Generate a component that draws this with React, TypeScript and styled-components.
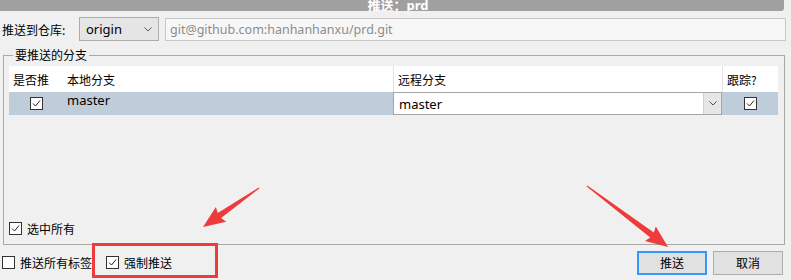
import React from 'react'
import styled, { createGlobalStyle } from 'styled-components'

const GlobalStyle = createGlobalStyle`
  html, body {
    margin: 0;
    padding: 0;
    background: #f0f0f0;
  }
  body {
    font-family: 'Noto Sans', 'Noto Sans CJK SC', sans-serif;
    font-size: 12px;
    color: #000;
  }
`

const Window = styled.div`
  position: relative;
  width: 791px;
  height: 280px;
  display: flex;
  flex-direction: column;
  overflow: hidden;
  background: #f0f0f0;
`

const TitleBar = styled.div`
  height: 11px;
  margin-right: 7px;
  background: #a0a0a0;
  border-bottom-right-radius: 3px;
  display: flex;
  justify-content: center;
  align-items: flex-end;
  overflow: hidden;
`

const TitleText = styled.span`
  color: #fff;
  font-weight: bold;
  font-size: 13px;
  line-height: 13px;
  margin-bottom: -1px;
  padding-left: 12px;
`

const RepoRow = styled.div`
  display: flex;
  align-items: center;
  height: 24px;
  margin-top: 6px;
  padding: 0 5px 0 2px;
`

const Label = styled.span`
  width: 77px;
  font-family: 'Noto Sans CJK SC', sans-serif;
`

const SelectBox = styled.div`
  box-sizing: border-box;
  width: 80px;
  height: 24px;
  background: #e5e5e5;
  border: 1px solid #adadad;
  display: flex;
  align-items: center;
  justify-content: space-between;
  padding: 0 6px 0 6px;
  font-size: 13px;
`

const UrlInput = styled.div`
  box-sizing: border-box;
  flex: 1;
  height: 23px;
  margin-left: 6px;
  background: #f7f7f7;
  border: 1px solid #c8c8c8;
  color: #8c8c8c;
  display: flex;
  align-items: center;
  padding-left: 4px;
  font-size: 12.5px;
`

const GroupBox = styled.fieldset`
  flex: 1;
  margin: 6px 6px 0 3px;
  padding: 0 6px 7px 5px;
  border: 1px solid #a8a8a8;
  min-width: 0;
  display: flex;
  flex-direction: column;
`

const Legend = styled.legend`
  margin-left: 4px;
  padding: 0 2px;
  font-family: 'Noto Sans CJK SC', sans-serif;
  line-height: 16px;
`

const Table = styled.div`
  display: grid;
  grid-template-columns: 54px 330px 329px 56px;
  margin-top: 3px;
`

const HeadCell = styled.div<{ $sep?: boolean }>`
  height: 26px;
  background: #fff;
  display: flex;
  align-items: center;
  padding-left: 4px;
  border-left: ${p => (p.$sep ? '1px solid #e3e3e3' : 'none')};
  font-family: 'Noto Sans CJK SC', sans-serif;
`

const RowCell = styled.div<{ $center?: boolean }>`
  height: 23px;
  background: #bfcddb;
  display: flex;
  align-items: ${p => (p.$center ? 'center' : 'flex-start')};
  justify-content: ${p => (p.$center ? 'center' : 'flex-start')};
`

const BranchName = styled.span`
  padding-left: 4px;
  font-size: 13px;
  line-height: 17px;
`

const Combo = styled.div`
  flex: 1;
  box-sizing: border-box;
  height: 23px;
  background: #fff;
  border: 1px solid #a6a6a6;
  display: flex;
  align-items: stretch;
`

const ComboText = styled.span`
  flex: 1;
  display: flex;
  align-items: center;
  padding-left: 5px;
  font-size: 13px;
`

const ComboButton = styled.span`
  width: 17px;
  background: #e6e6e6;
  border-left: 1px solid #cfcfcf;
  display: flex;
  align-items: center;
  justify-content: center;
`

const Spacer = styled.div`
  flex: 1;
`

const CheckRow = styled.label<{ $gap?: number }>`
  display: flex;
  align-items: center;
  gap: 5px;
  margin-right: ${p => p.$gap ?? 0}px;
  font-family: 'Noto Sans CJK SC', sans-serif;
`

const BottomRow = styled.div`
  height: 35px;
  display: flex;
  align-items: center;
  padding: 0 8px 0 2px;
`

const Button = styled.button<{ $primary?: boolean }>`
  box-sizing: border-box;
  width: 70px;
  height: 24px;
  margin-left: 6px;
  background: #e1e1e1;
  border: ${p => (p.$primary ? '2px solid #3399ff' : '1px solid #adadad')};
  font-family: 'Noto Sans CJK SC', sans-serif;
  font-size: 12px;
  padding: 0;
  color: #000;
`

const Overlay = styled.svg`
  position: absolute;
  left: 0;
  top: 0;
  pointer-events: none;
`

const BoxIcon = styled.svg`
  display: block;
  flex-shrink: 0;
`

function CheckBox({ checked }: { checked?: boolean }) {
  return (
    <BoxIcon width="13" height="13" viewBox="0 0 13 13">
      <rect x="0.5" y="0.5" width="12" height="12" fill="#fff" stroke="#333" />
      {checked && <polyline points="3,6.5 5.5,9 10,3.5" fill="none" stroke="#222" strokeWidth="1" />}
    </BoxIcon>
  )
}

function Chevron() {
  return (
    <svg width="8" height="5" viewBox="0 0 8 5">
      <polyline points="0.5,0.5 4,4 7.5,0.5" fill="none" stroke="#555" strokeWidth="1" />
    </svg>
  )
}

// annotation arrow: thin tail widening toward the head
function arrowPoints(tx: number, ty: number, px: number, py: number) {
  const dx = px - tx
  const dy = py - ty
  const len = Math.hypot(dx, dy)
  const ux = dx / len
  const uy = dy / len
  const nx = -uy
  const ny = ux
  const head = 20
  const bx = px - ux * head
  const by = py - uy * head
  const pts = [
    [tx + nx * 0.5, ty + ny * 0.5],
    [bx + nx * 3, by + ny * 3],
    [bx - ux * 2 + nx * 9, by - uy * 2 + ny * 9],
    [px, py],
    [bx - ux * 2 - nx * 9, by - uy * 2 - ny * 9],
    [bx - nx * 3, by - ny * 3],
    [tx - nx * 0.5, ty - ny * 0.5],
  ]
  return pts.map(p => `${p[0].toFixed(1)},${p[1].toFixed(1)}`).join(' ')
}

export default function App() {
  return (
    <>
      <GlobalStyle />
      <Window>
        <TitleBar>
          <TitleText>推送：prd</TitleText>
        </TitleBar>

        <RepoRow>
          <Label>推送到仓库:</Label>
          <SelectBox>
            <span>origin</span>
            <Chevron />
          </SelectBox>
          <UrlInput>git@github.com:hanhanhanxu/prd.git</UrlInput>
        </RepoRow>

        <GroupBox>
          <Legend>要推送的分支</Legend>
          <Table>
            <HeadCell>是否推</HeadCell>
            <HeadCell>本地分支</HeadCell>
            <HeadCell $sep>远程分支</HeadCell>
            <HeadCell $sep>跟踪?</HeadCell>

            <RowCell $center>
              <CheckBox checked />
            </RowCell>
            <RowCell>
              <BranchName>master</BranchName>
            </RowCell>
            <RowCell>
              <Combo>
                <ComboText>master</ComboText>
                <ComboButton>
                  <Chevron />
                </ComboButton>
              </Combo>
            </RowCell>
            <RowCell $center>
              <CheckBox checked />
            </RowCell>
          </Table>
          <Spacer />
          <CheckRow>
            <CheckBox checked />
            选中所有
          </CheckRow>
        </GroupBox>

        <BottomRow>
          <CheckRow $gap={14}>
            <CheckBox />
            推送所有标签
          </CheckRow>
          <CheckRow>
            <CheckBox checked />
            强制推送
          </CheckRow>
          <Spacer />
          <Button $primary>推送</Button>
          <Button>取消</Button>
        </BottomRow>

        <Overlay width="791" height="280" viewBox="0 0 791 280">
          <rect x="93.5" y="244.5" width="123" height="32" fill="none" stroke="#ee3b3b" strokeWidth="3" />
          <polygon points={arrowPoints(259, 188, 203, 227)} fill="#ee3b3b" />
          <polygon points={arrowPoints(587, 186, 668, 247)} fill="#ee3b3b" />
        </Overlay>
      </Window>
    </>
  )
}
